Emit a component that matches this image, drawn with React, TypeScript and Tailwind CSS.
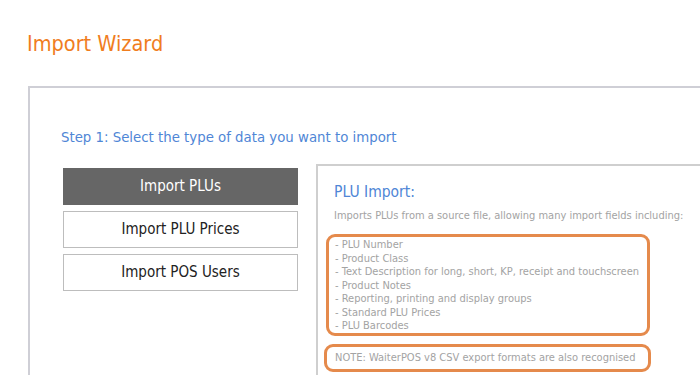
const font = { fontFamily: '"DejaVu Sans Condensed", "DejaVu Sans", sans-serif' };

const fields = [
  'PLU Number',
  'Product Class',
  'Text Description for long, short, KP, receipt and touchscreen',
  'Product Notes',
  'Reporting, printing and display groups',
  'Standard PLU Prices',
  'PLU Barcodes',
];

function WizardButton({ label, active }: { label: string; active?: boolean }) {
  return (
    <button
      className={`flex h-[37px] w-[235px] items-center justify-center border text-[15px] ${
        active ? 'border-[#666666] bg-[#666666] text-white' : 'border-[#bdbdbd] bg-white text-[#222222]'
      }`}
    >
      {label}
    </button>
  );
}

export default function App() {
  return (
    <div className="h-[375px] w-[700px] overflow-hidden bg-white" style={font}>
      <h1 className="pl-[27px] pt-[30px] text-[21.5px] leading-[28px] text-[#f07d1e]">Import Wizard</h1>

      <div className="ml-[28px] mt-[28px] h-[400px] w-[800px] border-l-2 border-t-2 border-[#cfcfd6] pl-[31px] pt-[39px]">
        <p className="text-[14.8px] leading-[20px] text-[#4f86d6]">Step 1: Select the type of data you want to import</p>

        <div className="mt-[17px] flex">
          {/* Left: import type buttons */}
          <div className="mt-[4px] flex flex-col gap-[6px] pl-[2px]">
            <WizardButton label="Import PLUs" active />
            <WizardButton label="Import PLU Prices" />
            <WizardButton label="Import POS Users" />
          </div>

          {/* Right: description panel */}
          <div className="ml-[18px] h-[300px] flex-1 border-l-2 border-t-2 border-[#cfcfcf] pl-[8px] pt-[16px]">
            <h2 className="pl-[8px] text-[15.5px] leading-[20px] text-[#4f86d6]">PLU Import:</h2>
            <p className="mt-[6px] whitespace-nowrap pl-[8px] text-[11px] leading-[16px] text-[#a3a3a3]">
              Imports PLUs from a source file, allowing many import fields including:
            </p>

            <div className="mt-[10px] w-[324px] rounded-[9px] border-[3px] border-[#e58a4c] px-[6px] pt-[1px]">
              {fields.map((f) => (
                <div key={f} className="whitespace-nowrap text-[11px] leading-[13.5px] text-[#a3a3a3]">
                  - {f}
                </div>
              ))}
            </div>

            <div className="mt-[8px] -ml-[2px] w-[327px] whitespace-nowrap rounded-[9px] border-[3px] border-[#e58a4c] px-[8px] py-[4px] text-[11px] leading-[14px] text-[#a3a3a3]">
              NOTE: WaiterPOS v8 CSV export formats are also recognised
            </div>
          </div>
        </div>
      </div>
    </div>
  );
}
